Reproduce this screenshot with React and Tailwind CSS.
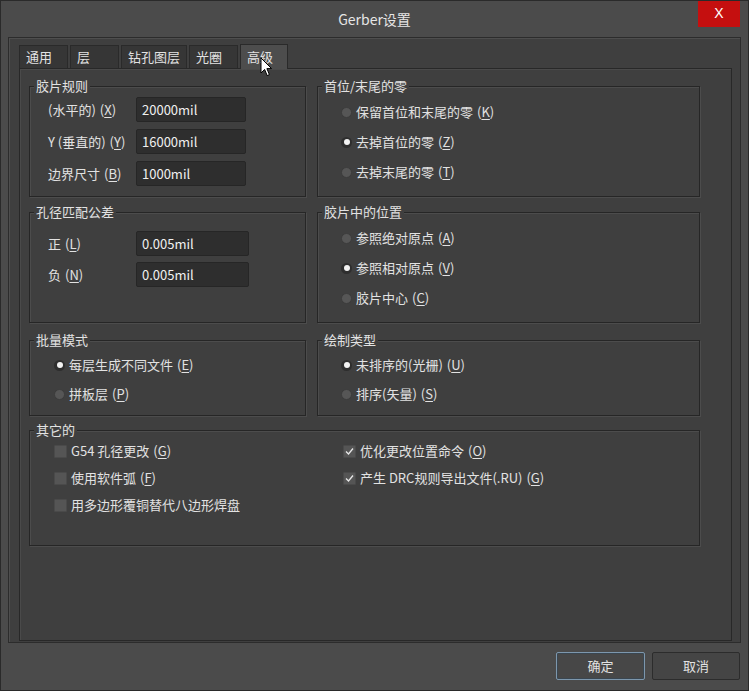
import React from "react";

const tabs = ["通用", "层", "钻孔图层", "光圈", "高级"];
const tabWidths = ["w-[49px]", "w-[49px]", "w-[66px]", "w-[49px]", "w-[48px]"];

const Key = ({ k }) => (
  <span className="ml-[4px]">
    (<span className="underline underline-offset-2">{k}</span>)
  </span>
);

const Group = ({ title, className, children }) => (
  <div className={`relative border border-[#262626] shadow-[inset_1px_1px_0_#4c4c4c,1px_1px_0_#4c4c4c] ${className}`}>
    <span className="absolute -top-[10px] left-[4px] px-[2px] bg-[#3f3f3f] leading-[18px] text-[13px]">
      {title}
    </span>
    {children}
  </div>
);

const Field = ({ label, k, value, w }) => (
  <div className="flex items-center h-[25px]">
    <div className="w-[88px]">
      {label}
      <Key k={k} />
    </div>
    <div className={`${w} h-[25px] bg-[#2e2e2e] border border-[#262626] rounded-[2px] flex items-center pl-[5px] text-[#f0f0f0]`}>
      {value}
    </div>
  </div>
);

const Radio = ({ checked, label, k }) => (
  <div className="flex items-center h-[20px]">
    <span
      className={`w-[11px] h-[11px] rounded-full flex items-center justify-center mr-[4px] ${
        checked ? "bg-[#2e2e2e]" : "bg-[#565656] border border-[#3c3c3c]"
      }`}
    >
      {checked && <span className="w-[6px] h-[6px] rounded-full bg-[#f2f2f2]" />}
    </span>
    {label}
    <Key k={k} />
  </div>
);

const Check = ({ checked, label, k }) => (
  <div className="flex items-center h-[20px]">
    <span className="w-[13px] h-[13px] bg-[#555555] border border-[#4a4a4a] rounded-[1px] mr-[4px] flex items-center justify-center">
      {checked && (
        <svg width="9" height="9" viewBox="0 0 9 9">
          <path d="M1 4.5 L3.5 7 L8 1.5" stroke="#e8e8e8" strokeWidth="1.3" fill="none" />
        </svg>
      )}
    </span>
    {label}
    {k && <Key k={k} />}
  </div>
);

export default function App() {
  return (
    <div className="w-[749px] h-[691px] bg-[#4b4b4b] border border-[#2a2a2a] flex flex-col text-[13px] text-[#e2e2e2] font-['Noto_Sans_CJK_SC','Liberation_Sans',sans-serif] relative overflow-hidden">
      {/* title bar */}
      <div className="h-[36px] flex items-center justify-center relative shrink-0">
        <span className="text-[14px] text-[#e6e6e6]">Gerber设置</span>
        <div className="absolute top-[-1px] right-[8px] w-[42px] h-[27px] bg-[#c50f0f] flex items-center justify-center text-white text-[14px] font-['Liberation_Sans',sans-serif]">
          X
        </div>
      </div>

      {/* content */}
      <div className="mx-[7px] h-[606px] bg-[#3f3f3f] border border-[#2c2c2c] shadow-[inset_1px_1px_0_#4e4e4e] pl-[10px] pr-[7px] pt-[6px] flex flex-col">
        <div className="flex h-[24px] items-end gap-[2px]">
          {tabs.map((t, i) => (
            <div
              key={t}
              className={`${tabWidths[i]} flex items-center pl-[6px] border border-b-0 border-[#2a2a2a] ${
                i === 4 ? "h-[25px] bg-[#4d4d4d] -mb-[1px] relative z-10" : "h-[23px] bg-[#363636]"
              }`}
            >
              {t}
            </div>
          ))}
        </div>

        <div className="w-[713px] h-[573px] border border-[#282828] shadow-[inset_1px_1px_0_#4a4a4a] pl-[9px] pr-[30px] pt-[17px] flex flex-col">
          <div className="grid grid-cols-[277px_383px] gap-x-[11px]">
            <Group title="胶片规则" className="h-[111px] pl-[18px] pt-[10px] flex flex-col gap-[7px]">
              <Field label="(水平的)" k="X" value="20000mil" w="w-[110px]" />
              <Field label="Y (垂直的)" k="Y" value="16000mil" w="w-[110px]" />
              <Field label="边界尺寸" k="B" value="1000mil" w="w-[110px]" />
            </Group>
            <Group title="首位/末尾的零" className="h-[111px] pl-[23px] pt-[15px] flex flex-col gap-[10px]">
              <Radio label="保留首位和末尾的零" k="K" />
              <Radio checked label="去掉首位的零" k="Z" />
              <Radio label="去掉末尾的零" k="T" />
            </Group>
          </div>

          <div className="grid grid-cols-[277px_383px] gap-x-[11px] mt-[15px]">
            <Group title="孔径匹配公差" className="h-[111px] pl-[18px] pt-[18px] flex flex-col gap-[6px]">
              <Field label="正" k="L" value="0.005mil" w="w-[113px]" />
              <Field label="负" k="N" value="0.005mil" w="w-[113px]" />
            </Group>
            <Group title="胶片中的位置" className="h-[111px] pl-[23px] pt-[15px] flex flex-col gap-[10px]">
              <Radio label="参照绝对原点" k="A" />
              <Radio checked label="参照相对原点" k="V" />
              <Radio label="胶片中心" k="C" />
            </Group>
          </div>

          <div className="grid grid-cols-[277px_383px] gap-x-[11px] mt-[17px]">
            <Group title="批量模式" className="h-[76px] pl-[24px] pt-[14px] flex flex-col gap-[9px]">
              <Radio checked label="每层生成不同文件" k="E" />
              <Radio label="拼板层" k="P" />
            </Group>
            <Group title="绘制类型" className="h-[76px] pl-[23px] pt-[14px] flex flex-col gap-[9px]">
              <Radio checked label="未排序的(光栅)" k="U" />
              <Radio label="排序(矢量)" k="S" />
            </Group>
          </div>

          <Group title="其它的" className="mt-[14px] w-[671px] h-[116px] pl-[24px] pt-[10px] grid grid-cols-[289px_1fr] auto-rows-[20px] gap-y-[7px] content-start">
            <Check label="G54 孔径更改" k="G" />
            <Check checked label="优化更改位置命令" k="O" />
            <Check label="使用软件弧" k="F" />
            <Check checked label="产生 DRC规则导出文件(.RU)" k="G" />
            <Check label="用多边形覆铜替代八边形焊盘" />
          </Group>
        </div>
      </div>

      {/* buttons */}
      <div className="flex-1 flex justify-end items-start pt-[9px] pr-[8px] gap-[7px]">
        <div className="w-[89px] h-[28px] border border-[#7d97ad] rounded-[2px] bg-[#474747] shadow-[inset_0_0_0_1px_#3a4650] flex items-center justify-center">
          确定
        </div>
        <div className="w-[88px] h-[28px] border border-[#2c2c2c] rounded-[2px] bg-[#454545] flex items-center justify-center">
          取消
        </div>
      </div>

      {/* mouse cursor */}
      <svg className="absolute left-[259px] top-[56px] z-20" width="13" height="20" viewBox="0 0 13 20">
        <path d="M1 1 L1 16 L4.6 12.4 L7.2 18.6 L9.4 17.6 L6.9 11.6 L11.6 11.6 Z" fill="#ffffff" stroke="#000000" strokeWidth="1" />
      </svg>
    </div>
  );
}
